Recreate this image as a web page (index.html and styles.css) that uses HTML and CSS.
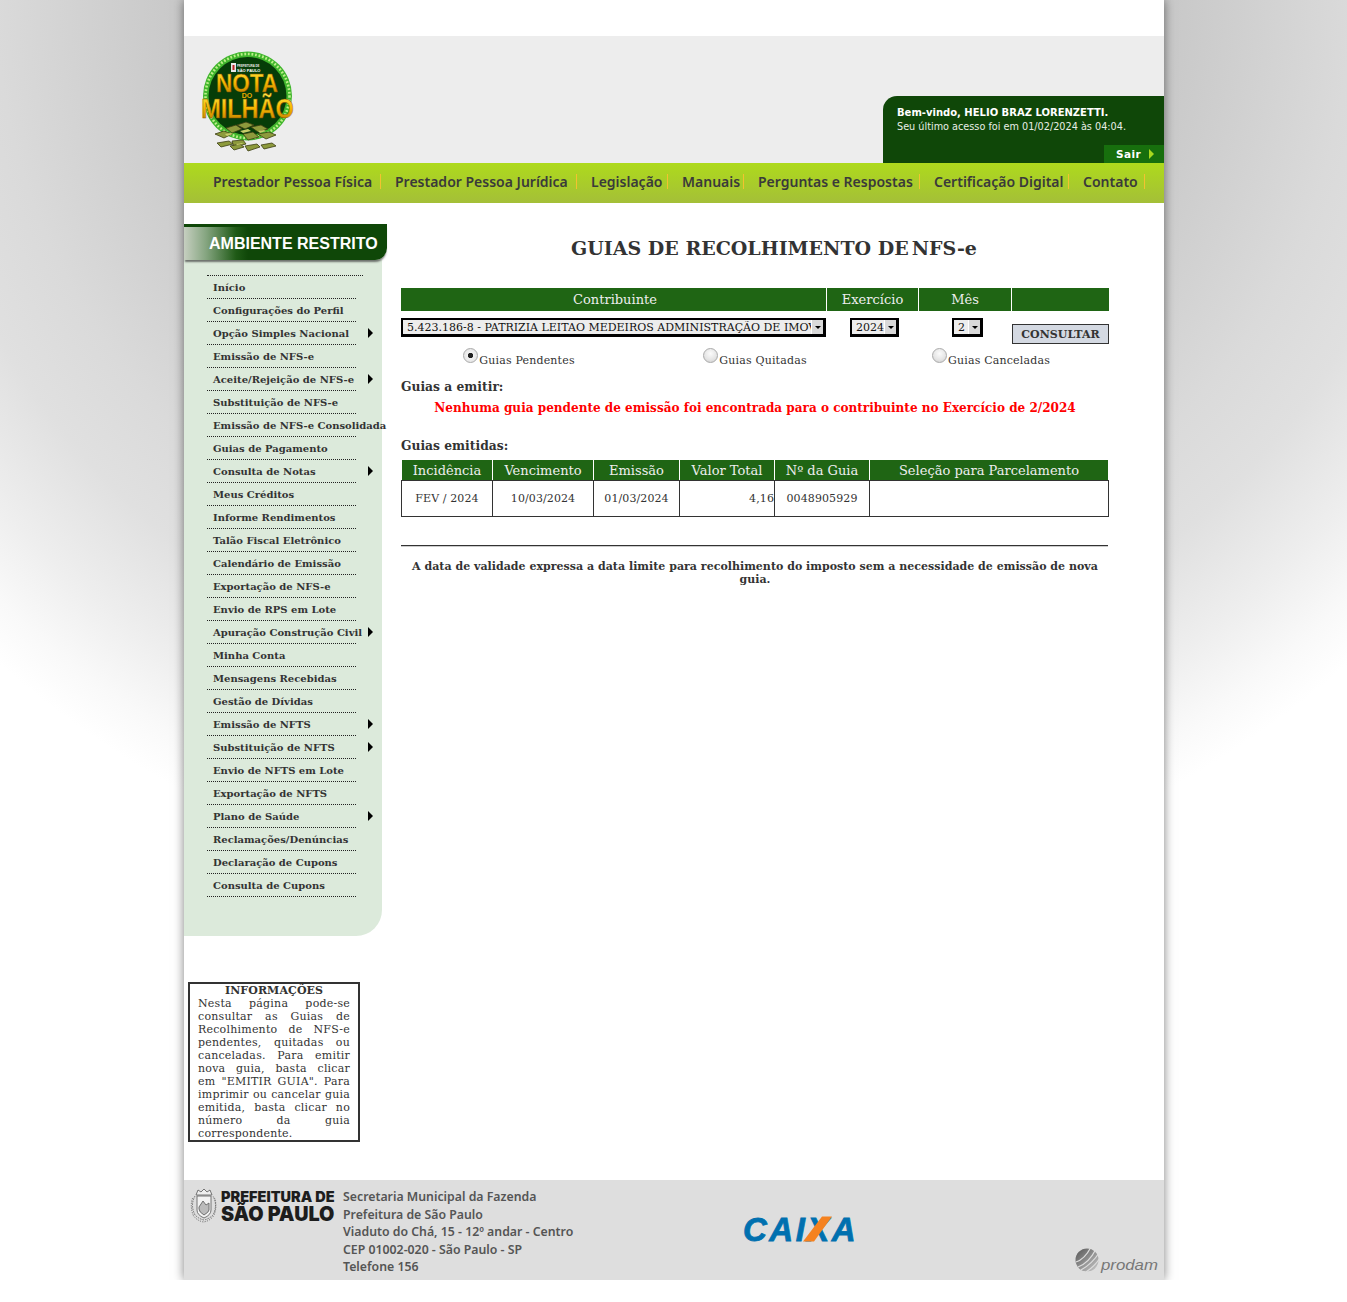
FILE: index.html
```html
<!DOCTYPE html>
<html lang="pt-BR">
<head>
<meta charset="utf-8">
<title>Guias de Recolhimento de NFS-e</title>
<link rel="stylesheet" href="styles.css">
</head>
<body>
<div class="page">
  <div class="topstrip"></div>
  <header class="masthead">
    <svg class="logo" width="100" height="104" viewBox="198 48 100 104" aria-label="Nota do Milhão">
      <defs>
        <linearGradient id="gold" x1="0" y1="0" x2="0" y2="1">
          <stop offset="0" stop-color="#ffe94a"/><stop offset=".5" stop-color="#f5b800"/><stop offset="1" stop-color="#b87400"/>
        </linearGradient>
      </defs>
      <circle cx="247.500" cy="96" r="44.500" fill="#3fb52c"/>
      <circle cx="247.500" cy="96" r="42" fill="none" stroke="#bdf08a" stroke-width="2.600" stroke-dasharray="1.800 1.800"/>
      <circle cx="247.500" cy="96" r="39" fill="#063d08"/>
      <rect x="231" y="63" width="5" height="9" fill="#e8e8e8"/>
      <rect x="232.500" y="65" width="2" height="5" fill="#b22"/>
      <text x="237" y="67" class="lg-small">PREFEITURA DE</text>
      <text x="237" y="72" class="lg-small lg-strong">SÃO PAULO</text>
      <text transform="translate(247 91.500) scale(1 1.150)" class="lg-word">NOTA</text>
      <text x="247" y="98" class="lg-do">DO</text>
      <text transform="translate(247.500 118) scale(1 1.150)" class="lg-word lg-wide">MILHÃO</text>
      <g fill="#8d9a3c" stroke="#3b3d12" stroke-width=".8">
        <path d="M215 134l9-3 8 3-8 4z"/><path d="M226 128l10-3 6 4-10 4z"/><path d="M237 125l9-3 8 3-9 4z"/><path d="M251 127l10-2 7 4-10 3z"/><path d="M258 134l11-2 7 3-10 4z"/>
        <path d="M217 143l12-2 4 3-12 3z"/><path d="M232 141l11-1 3 4-12 3z"/><path d="M243 134l10-2 6 5-11 3z"/><path d="M245 146l12-2 3 3-12 4z"/><path d="M261 145l11-2 4 3-12 3z"/><path d="M230 146l10-2 4 3-10 3z"/>
      </g>
      <g fill="#c6cc6a"><path d="M240 131l8-2 3 2-8 2z"/><path d="M225 134l6-1 2 1-6 2z"/><path d="M258 131l6-1 2 1-6 2z"/><path d="M236 144l6-1 1 1-6 1z"/></g>
    </svg>
    <div class="welcome">
      <p class="welcome-name">Bem-vindo, HELIO BRAZ LORENZETTI.</p>
      <p class="welcome-last">Seu último acesso foi em 01/02/2024 às 04:04.</p>
      <a class="logout">Sair<span class="logout-arrow"></span></a>
    </div>
  </header>
  <nav class="mainnav">
    <a>Prestador Pessoa Física</a>
    <a>Prestador Pessoa Jurídica</a>
    <a>Legislação</a>
    <a>Manuais</a>
    <a>Perguntas e Respostas</a>
    <a>Certificação Digital</a>
    <a>Contato</a>
  </nav>
  <div class="columns">
    <aside class="side">
      <div class="side-title">AMBIENTE RESTRITO</div>
      <div class="side-panel">
        <ul class="menu">
          <li>Início</li>
          <li>Configurações do Perfil</li>
          <li class="sub">Opção Simples Nacional</li>
          <li>Emissão de NFS-e</li>
          <li class="sub">Aceite/Rejeição de NFS-e</li>
          <li>Substituição de NFS-e</li>
          <li>Emissão de NFS-e Consolidada</li>
          <li>Guias de Pagamento</li>
          <li class="sub">Consulta de Notas</li>
          <li>Meus Créditos</li>
          <li>Informe Rendimentos</li>
          <li>Talão Fiscal Eletrônico</li>
          <li>Calendário de Emissão</li>
          <li>Exportação de NFS-e</li>
          <li>Envio de RPS em Lote</li>
          <li class="sub">Apuração Construção Civil</li>
          <li>Minha Conta</li>
          <li>Mensagens Recebidas</li>
          <li>Gestão de Dívidas</li>
          <li class="sub">Emissão de NFTS</li>
          <li class="sub">Substituição de NFTS</li>
          <li>Envio de NFTS em Lote</li>
          <li>Exportação de NFTS</li>
          <li class="sub">Plano de Saúde</li>
          <li>Reclamações/Denúncias</li>
          <li>Declaração de Cupons</li>
          <li>Consulta de Cupons</li>
        </ul>
      </div>
      <div class="infobox">
        <h3>INFORMAÇÕES</h3>
        <p>Nesta página pode-se consultar as Guias de Recolhimento de NFS-e pendentes, quitadas ou canceladas. Para emitir nova guia, basta clicar em "EMITIR GUIA". Para imprimir ou cancelar guia emitida, basta clicar no número da guia correspondente.</p>
      </div>
    </aside>
    <main class="content">
      <h1 class="title">GUIAS DE RECOLHIMENTO DE<span class="title-end">NFS-e</span></h1>
      <div class="filter-head">
        <div>Contribuinte</div><div>Exercício</div><div>Mês</div><div></div>
      </div>
      <div class="filter-row">
        <div class="cell-left"><span class="sel sel-wide"><select><option>5.423.186-8 - PATRIZIA LEITAO MEDEIROS ADMINISTRAÇÃO DE IMOVEIS LTDA</option></select></span></div>
        <div class="cell-center"><span class="sel sel-year"><select><option>2024</option></select></span></div>
        <div class="cell-center"><span class="sel sel-month"><select><option>2</option></select></span></div>
        <div class="cell-btn"><button class="btn">CONSULTAR</button></div>
      </div>
      <div class="radios">
        <label><input type="radio" name="g" checked>Guias Pendentes</label>
        <label><input type="radio" name="g">Guias Quitadas</label>
        <label><input type="radio" name="g">Guias Canceladas</label>
      </div>
      <h2 class="subhead first">Guias a emitir:</h2>
      <p class="alert">Nenhuma guia pendente de emissão foi encontrada para o contribuinte no Exercício de 2/2024</p>
      <h2 class="subhead second">Guias emitidas:</h2>
      <table class="grid">
        <colgroup><col class="c1"><col class="c2"><col class="c3"><col class="c4"><col class="c5"><col class="c6"></colgroup>
        <thead><tr><th>Incidência</th><th>Vencimento</th><th>Emissão</th><th>Valor Total</th><th>Nº da Guia</th><th>Seleção para Parcelamento</th></tr></thead>
        <tbody><tr><td>FEV / 2024</td><td>10/03/2024</td><td>01/03/2024</td><td class="num">4,16</td><td>0048905929</td><td></td></tr></tbody>
      </table>
      <hr class="rule">
      <p class="note">A data de validade expressa a data limite para recolhimento do imposto sem a necessidade de emissão de nova guia.</p>
    </main>
  </div>
  <footer class="foot">
    <div class="pref">
      <svg class="crest" width="28" height="37" viewBox="0 0 28 37" aria-hidden="true">
        <g fill="none" stroke="#666" stroke-width=".9">
          <path d="M6 9l2-5 3 2 3-3 3 3 3-2 2 5z" fill="#eee"/>
          <path d="M7 10h14v14q0 5-7 8-7-3-7-8z" fill="#f2f2f2"/>
          <path d="M9 21l4-6 3 4 3-2v7q0 2-5 5-5-3-5-6z" fill="#bbb"/>
          <path d="M5 10q-5 9 0 19 4 4 9 5 5-1 9-5 5-10 0-19" stroke-dasharray="1.600 1"/>
          <path d="M2.600 12q-3 9 1 18 4 5 10 6 6-1 10-6 4-9 1-18" stroke-dasharray="1.200 1.200"/>
        </g>
      </svg>
      <div class="pref-name"><span class="pref-l1">PREFEITURA DE</span><span class="pref-l2">SÃO PAULO</span></div>
    </div>
    <address class="addr">
      <span>Secretaria Municipal da Fazenda</span>
      <span>Prefeitura de São Paulo</span>
      <span>Viaduto do Chá, 15 - 12º andar - Centro</span>
      <span>CEP 01002-020 - São Paulo - SP</span>
      <span>Telefone 156</span>
    </address>
    <svg class="caixa" width="130" height="30" viewBox="0 0 130 30" aria-label="CAIXA">
      <text x="0" y="25" class="caixa-t">CAIXA</text>
      <path d="M60 25.500h11l18-25h-10z" fill="#f58220"/>
    </svg>
    <svg class="prodam" width="84" height="26" viewBox="0 0 84 26" aria-label="prodam">
      <defs>
        <linearGradient id="pg" x1="0" y1="0" x2="1" y2="1"><stop offset="0" stop-color="#555"/><stop offset="1" stop-color="#ccc"/></linearGradient>
      </defs>
      <circle cx="12" cy="12" r="11.500" fill="url(#pg)"/>
      <g stroke="#dedede" stroke-width="1.200" fill="none">
        <path d="M3 19Q14 15 21 1"/><path d="M6 22Q17 16 24 5"/><path d="M11 24Q20 18 25 10"/><path d="M1 14Q10 11 16 -1"/>
      </g>
      <text transform="translate(26 22) scale(1.200 1)" class="prodam-t">prodam</text>
    </svg>
  </footer>
</div>
</body>
</html>
```
FILE: styles.css
```css
* { box-sizing: border-box; }
html, body { margin: 0; padding: 0; }
body {
  min-height: 1302px;
  background: #fff radial-gradient(ellipse 981px 914px at 50% 0, #b4b4b4 0, #c8c8c8 50%, #dadada 69%, #e0e0e0 78%, #eeeeee 88%, #f9f9f9 95%, #fff 100%) no-repeat;
  font-family: "DejaVu Serif", serif;
  color: #333;
}
.page {
  width: 980px;
  margin-left: 184px;
  background: #fff;
  box-shadow: 0 0 10px rgba(0,0,0,.5);
  clip-path: inset(0 -30px 0 -30px);
}
.topstrip { height: 36px; background: #fff; }
.masthead {
  height: 127px;
  background: #ededed;
  display: flex;
  justify-content: space-between;
  align-items: flex-end;
}
.logo { margin: 0 0 11px 14px; }
.lg-small { font: 700 2.800px "Liberation Sans", sans-serif; fill: #eee; }
.lg-strong { font-size: 4px; fill: #fff; }
.lg-word {
  font: 700 22.500px "Liberation Sans", sans-serif;
  text-anchor: middle;
  fill: url(#gold);
  stroke: #7a4c00;
  stroke-width: .4px;
}
.lg-do { font: 700 7px "Liberation Sans", sans-serif; text-anchor: middle; fill: #e9a900; }
.lg-wide { font-size: 23.500px; }
.welcome {
  width: 281px;
  height: 67px;
  background: #0f4708;
  border-top-left-radius: 14px;
  color: #fff;
  font-family: "DejaVu Sans", sans-serif;
  font-size: 10px;
  padding-top: 10px;
  display: flex;
  flex-direction: column;
}
.welcome p { margin: 0 0 0 14px; line-height: 14px; }
.welcome-name { font-weight: 700; }
.welcome-last { color: #e8eee6; font-size: 9.700px; }
.logout {
  margin-top: auto;
  align-self: flex-end;
  width: 60px;
  height: 18px;
  background: #176f0d;
  font-weight: 700;
  font-size: 10.500px;
  letter-spacing: .4px;
  line-height: 18px;
  padding-left: 12px;
  display: flex;
  align-items: center;
  gap: 8px;
}
.logout-arrow {
  width: 0;
  height: 0;
  border-left: 5px solid #a8d81e;
  border-top: 5px solid transparent;
  border-bottom: 5px solid transparent;
}
.mainnav {
  height: 40px;
  background: linear-gradient(#aeda1c, #a4bf38);
  display: grid;
  grid-template-columns: 182px 196px 91px 76px 176px 149px 76px;
  align-items: center;
  padding: 0 0 3px 29px;
  font-family: "Noto Sans", sans-serif;
  font-weight: 600;
  font-size: 14px;
  color: #3a3a3a;
}
.mainnav a {
  line-height: 15px;
  margin-right: 14px;
  border-right: 1px solid #f3c22f;
  white-space: nowrap;
}
.columns { display: flex; height: 977px; }
.side { width: 217px; flex: none; padding-top: 21px; }
.side-title {
  width: 203px;
  height: 36px;
  padding: 4px 0 0 25px;
  font: 700 16px/32px "Liberation Sans", sans-serif;
  color: #fff;
  background: linear-gradient(#0f4708 3px, transparent 3px), linear-gradient(90deg, #c6cfc0 0, #85a580 22px, #1f5a16 52px, #0f4708 64px);
  border-bottom-right-radius: 12px;
  box-shadow: 0 3px 2px -1px rgba(60,60,60,.7);
  position: relative;
  z-index: 1;
}
.side-panel {
  width: 198px;
  height: 676px;
  background: #dceadb;
  border-bottom-right-radius: 26px;
  padding: 15px 0 0 23px;
}
.menu {
  list-style: none;
  margin: 0;
  padding: 0;
  font-size: 10px;
  font-weight: 700;
}
.menu::before {
  content: "";
  display: block;
  width: 156px;
  border-top: 1px dotted #222;
}
.menu li {
  position: relative;
  width: 149px;
  height: 23px;
  line-height: 23px;
  padding-left: 6px;
  border-bottom: 1px dotted #222;
  white-space: nowrap;
}
.menu .sub::after {
  content: "";
  position: absolute;
  left: 161px;
  top: 6px;
  border-left: 5px solid #000;
  border-top: 5px solid transparent;
  border-bottom: 5px solid transparent;
}
.infobox {
  width: 172px;
  height: 160px;
  margin: 46px 0 0 4px;
  border: 2px solid #333;
  padding: 0 8px;
  font-size: 11px;
  line-height: 13px;
}
.infobox h3 { margin: 0; font-size: 11px; line-height: 13px; text-align: center; font-weight: 700; letter-spacing: .1px; }
.infobox p { margin: 0; text-align: justify; letter-spacing: .22px; }
.content { width: 708px; flex: none; }
.title {
  margin: 33px 0 0;
  font-size: 19px;
  line-height: 24px;
  text-align: center;
  font-weight: 700;
  padding-left: 38px;
  white-space: nowrap;
}
.title-end { margin-left: 3px; }
.filter-head, .filter-row { display: grid; grid-template-columns: 425px 91px 92px 97px; gap: 0 1px; }
.filter-head { margin-top: 28px; height: 22px; }
.filter-head div {
  background: #1f6514;
  color: #eee;
  font-size: 13px;
  line-height: 23px;
  text-align: center;
}
.filter-head div:first-child { padding-left: 3px; }
.filter-row { margin-top: 8px; height: 26px; }
.cell-center { text-align: center; }
.cell-btn { padding-top: 6px; }
.sel { display: block; position: relative; height: 19px; }
.sel-year { width: 49px; margin: 0 0 0 23px; }
.sel-month { width: 31px; margin: 0 0 0 33px; }
.sel select {
  appearance: none;
  display: block;
  width: 100%;
  height: 19px;
  border-style: solid;
  border-color: #000;
  border-width: 2px 3px 3px 2px;
  border-radius: 0;
  background: #ededed;
  color: #111;
  padding: 0 12px 0 4px;
  margin: 0;
  font: 11px "DejaVu Serif", serif;
}
.sel::before {
  content: "";
  position: absolute;
  right: 3px;
  top: 2px;
  width: 11px;
  height: 14px;
  background: #d9d9d9;
  border-left: 1px solid #fff;
}
.sel::after {
  content: "";
  position: absolute;
  right: 5px;
  top: 8px;
  border-top: 3px solid #000;
  border-left: 3px solid transparent;
  border-right: 3px solid transparent;
}
.btn {
  display: block;
  width: 97px;
  height: 20px;
  padding: 0;
  background: #d4d9e2;
  border: 1px solid #333;
  border-radius: 0;
  color: #333;
  font: 700 11px "DejaVu Serif", serif;
  letter-spacing: .05px;
}
.radios {
  display: grid;
  grid-template-columns: repeat(3, 1fr);
  margin-top: 4px;
  height: 20px;
  font-size: 11px;
  letter-spacing: .18px;
  text-align: center;
  line-height: 20px;
}
.radios label { white-space: nowrap; }
.radios input {
  appearance: none;
  width: 15px;
  height: 15px;
  margin: 0 1px 0 0;
  border: 1px solid #aaa;
  border-radius: 50%;
  background: radial-gradient(circle at 50% 35%, #fbfbfb 0, #e4e4e4 60%, #c8c8c8 100%);
  vertical-align: 1px;
}
.radios input:checked { background: radial-gradient(circle at 50% 50%, #222 0, #222 2.300px, #f2f2f2 3px, #dcdcdc 100%); }
.subhead { margin: 0; font-size: 12.300px; line-height: 16px; font-weight: 700; }
.subhead.first { margin-top: 11px; }
.alert {
  margin: 5px 0 0;
  font-size: 12.050px;
  line-height: 16px;
  font-weight: 700;
  color: #f00;
  text-align: center;
}
.subhead.second { margin-top: 22px; }
.grid {
  width: 707px;
  margin-top: 5px;
  border-collapse: collapse;
  table-layout: fixed;
}
.c1 { width: 91px; } .c2 { width: 101px; } .c3 { width: 86px; } .c4 { width: 95px; } .c5 { width: 95px; } .c6 { width: 239px; }
.grid th {
  height: 21px;
  padding: 0;
  background: #1f6514;
  color: #eee;
  font-weight: 400;
  font-size: 13px;
  border: 1px solid #fff;
  border-bottom-color: #333;
}
.grid td {
  height: 36px;
  padding: 0;
  border: 1px solid #333;
  font-size: 11px;
  text-align: center;
  letter-spacing: .1px;
}
.grid td.num { text-align: right; }
.rule {
  width: 707px;
  margin: 28px 0 0;
  border: 0;
  height: 2px;
  background: linear-gradient(#333 1px, #ccc 1px);
}
.note {
  margin: 13px 0 0;
  font-size: 11px;
  line-height: 13px;
  font-weight: 700;
  text-align: center;
  letter-spacing: .02px;
}
.foot {
  height: 100px;
  background: #dedede;
  display: flex;
  position: relative;
}
.pref { width: 159px; flex: none; display: flex; padding: 6px 0 0 6px; gap: 3px; }
.pref-name { display: flex; flex-direction: column; font-family: Inter, "Liberation Sans", sans-serif; font-weight: 900; color: #1d1d1d; margin-top: 2px; }
.pref-l1 { font-size: 14.500px; line-height: 17px; white-space: nowrap; }
.pref-l2 { font-size: 19.800px; line-height: 19px; white-space: nowrap; }
.addr {
  width: 400px;
  flex: none;
  padding-top: 8px;
  font-style: normal;
  font-family: "Noto Sans", sans-serif;
  font-weight: 600;
  font-size: 12.300px;
  line-height: 17.500px;
  color: #555;
  display: flex;
  flex-direction: column;
}
.caixa { margin: 36px 0 0 0; }
.caixa-t { font: italic 700 33px "Liberation Sans", sans-serif; letter-spacing: 2.500px; fill: #0070af; stroke: #0070af; stroke-width: .8px; }
.prodam { position: absolute; right: 5px; top: 68px; }
.prodam-t { font: italic 400 14px "Liberation Sans", sans-serif; fill: #777; }
```
